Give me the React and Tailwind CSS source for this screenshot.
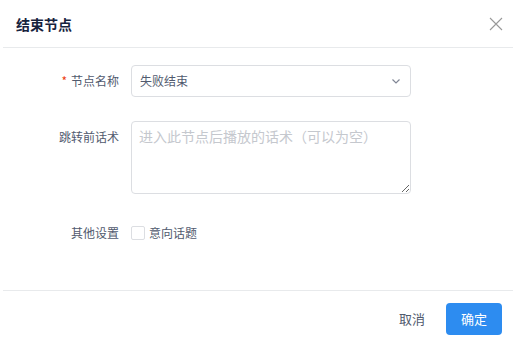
import React from 'react';

const font = { fontFamily: '"Noto Sans CJK SC", "Noto Sans", sans-serif' };

export default function App() {
    return (
        <div className="w-[513px] h-[343px] bg-white flex flex-col text-[#515a6e]" style={font}>
            {/* Header */}
            <div className="h-[48px] flex items-center justify-between pl-4 pr-[10px] border-b border-[#e8eaec] ml-[3px]">
                <span className="text-[14px] font-bold text-[#17233d] -ml-[3px] leading-none">结束节点</span>
                <svg width="14" height="14" viewBox="0 0 14 14" className="text-[#999]">
                    <path d="M1 1 L13 13 M13 1 L1 13" stroke="currentColor" strokeWidth="1.1" fill="none" />
                </svg>
            </div>

            {/* Body */}
            <div className="flex-1 pt-[17px] flex flex-col">
                <div className="flex items-center h-[32px]">
                    <label className="w-[131px] pr-3 text-right text-[12px] leading-none">
                        <span className="text-[#ed4014] mr-1">*</span>节点名称
                    </label>
                    <div className="w-[280px] h-[32px] border border-[#dcdee2] rounded-[4px] flex items-center justify-between pl-[8px] pr-[9px]">
                        <span className="text-[12px] text-[#515a6e]">失败结束</span>
                        <svg width="10" height="10" viewBox="0 0 10 10" className="text-[#808695]">
                            <path d="M1.5 3.5 L5 7 L8.5 3.5" stroke="currentColor" strokeWidth="1.2" fill="none" />
                        </svg>
                    </div>
                </div>

                <div className="flex items-start mt-[24px]">
                    <label className="w-[131px] pr-3 pt-[8px] text-right text-[12px] leading-[16px]">跳转前话术</label>
                    <textarea
                        className="w-[280px] h-[73px] border border-[#dcdee2] rounded-[4px] px-[7px] py-[4px] text-[14px] leading-[20px] outline-none placeholder:text-[#c5c8ce]"
                        style={font}
                        placeholder="进入此节点后播放的话术（可以为空）"
                    />
                </div>

                <div className="flex items-center mt-[30px]">
                    <label className="w-[131px] pr-3 text-right text-[12px] leading-none">其他设置</label>
                    <div className="flex items-center gap-[4px]">
                        <span className="w-[14px] h-[14px] border border-[#dcdee2] rounded-[2px] bg-white" />
                        <span className="text-[12px]">意向话题</span>
                    </div>
                </div>
            </div>

            {/* Footer */}
            <div className="h-[53px] border-t border-[#e8eaec] ml-[3px] flex items-start justify-end pt-[12px] pr-[11px]">
                <button className="h-[32px] px-[12px] text-[13px] text-[#515a6e] mr-[9px]">取消</button>
                <button className="w-[56px] h-[32px] rounded-[4px] bg-[#2d8cf0] text-white text-[13px]">确定</button>
            </div>
        </div>
    );
}
